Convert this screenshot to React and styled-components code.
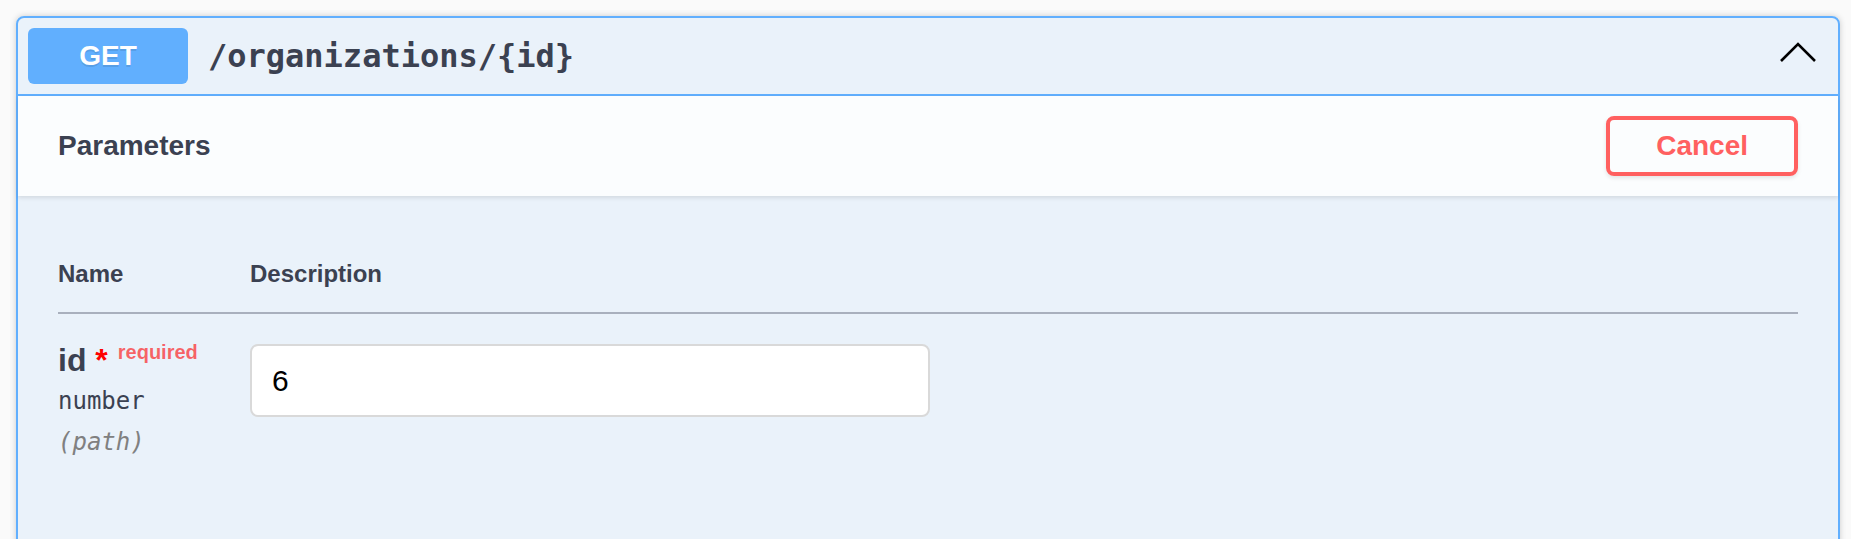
import React from 'react'
import styled, { createGlobalStyle } from 'styled-components'

const GlobalStyle = createGlobalStyle`
  html, body {
    margin: 0;
    padding: 0;
    height: 539px;
    overflow: hidden;
    background: #fafafa;
  }
  body {
    font-family: "Liberation Sans", Arial, sans-serif;
    color: #3b4151;
  }
`;

const Page = styled.div`
  padding: 16px 11px 0 16px;
`;

const Opblock = styled.div`
  border: 2px solid #61affe;
  border-radius: 8px;
  background: rgba(97, 175, 254, 0.1);
  box-shadow: 0 0 6px rgba(0, 0, 0, 0.19);
  min-height: 640px;
`;

const Summary = styled.div`
  display: flex;
  align-items: center;
  padding: 10px;
  border-bottom: 2px solid #61affe;
`;

const Method = styled.span`
  background: #61affe;
  border-radius: 6px;
  color: #fff;
  font-size: 28px;
  font-weight: 700;
  line-height: 32px;
  min-width: 160px;
  padding: 12px 0;
  text-align: center;
  text-shadow: 0 2px 0 rgba(0, 0, 0, 0.1);
`;

const Path = styled.span`
  flex: 1;
  padding: 0 20px;
  font-family: "DejaVu Sans Mono", "Liberation Mono", monospace;
  font-size: 32px;
  font-weight: 700;
  color: #3b4151;
`;

const Arrow = styled.svg`
  margin-right: 12px;
  flex-shrink: 0;
`;

const SectionHeader = styled.div`
  display: flex;
  align-items: center;
  justify-content: space-between;
  box-sizing: border-box;
  min-height: 100px;
  padding: 16px 40px;
  background: rgba(255, 255, 255, 0.8);
  box-shadow: 0 2px 4px rgba(0, 0, 0, 0.1);
`;

const Title = styled.h4`
  margin: 0;
  font-size: 28px;
  font-weight: 700;
  color: #3b4151;
`;

const Button = styled.button`
  background: transparent;
  border: 4px solid ${p => p.$color};
  border-radius: 8px;
  color: ${p => p.$color};
  font-family: "Liberation Sans", Arial, sans-serif;
  font-size: 28px;
  font-weight: 700;
  line-height: 32px;
  padding: 10px 46px;
  box-shadow: 0 2px 4px rgba(0, 0, 0, 0.1);
`;

const TableContainer = styled.div`
  padding: 40px;
`;

const Table = styled.div`
  display: grid;
  grid-template-columns: 192px 1fr;
`;

const Th = styled.div`
  padding: 24px 0;
  border-bottom: 2px solid #a9b0bd;
  font-size: 24px;
  line-height: 28px;
  font-weight: 700;
  color: #3b4151;
`;

const Td = styled.div`
  padding-top: 20px;
`;

const ParamName = styled.div`
  font-size: 32px;
  line-height: 37px;
  font-weight: 700;
  color: #3b4151;
`;

const Star = styled.span`
  color: red;
`;

const Required = styled.span`
  font-size: 20px;
  color: rgba(255, 0, 0, 0.6);
  padding: 10px;
  vertical-align: 12px;
`;

const ParamType = styled.div`
  font-family: "DejaVu Sans Mono", "Liberation Mono", monospace;
  font-size: 24px;
  line-height: 28px;
  padding: 8px 0 13px;
  color: #3b4151;
`;

const ParamIn = styled.div`
  font-family: "DejaVu Sans Mono", "Liberation Mono", monospace;
  font-size: 24px;
  line-height: 28px;
  font-style: italic;
  font-weight: 300;
  color: gray;
`;

const Input = styled.input`
  display: block;
  box-sizing: border-box;
  width: 680px;
  height: 73px;
  margin: 10px 0;
  padding: 0 20px;
  border: 2px solid #d9d9d9;
  border-radius: 8px;
  background: #fff;
  font-family: "Liberation Sans", Arial, sans-serif;
  font-size: 30px;
  color: #000;
  outline: none;
`;

export default function App() {
  return (
    <>
      <GlobalStyle />
      <Page>
        <Opblock>
          <Summary>
            <Method>GET</Method>
            <Path>/organizations/{'{id}'}</Path>
            <Arrow width="36" height="40" viewBox="0 0 36 40">
              <polyline points="1,25 18,8 35,25" fill="none" stroke="#000" strokeWidth="2.6" />
            </Arrow>
          </Summary>
          <SectionHeader>
            <Title>Parameters</Title>
            <Button $color="#ff6060">Cancel</Button>
          </SectionHeader>
          <TableContainer>
            <Table>
              <Th>Name</Th>
              <Th>Description</Th>
              <Td>
                <ParamName>
                  id<Star>&nbsp;*</Star>
                  <Required>required</Required>
                </ParamName>
                <ParamType>number</ParamType>
                <ParamIn>(path)</ParamIn>
              </Td>
              <Td>
                <Input type="text" defaultValue="6" />
              </Td>
            </Table>
          </TableContainer>
        </Opblock>
      </Page>
    </>
  );
}
